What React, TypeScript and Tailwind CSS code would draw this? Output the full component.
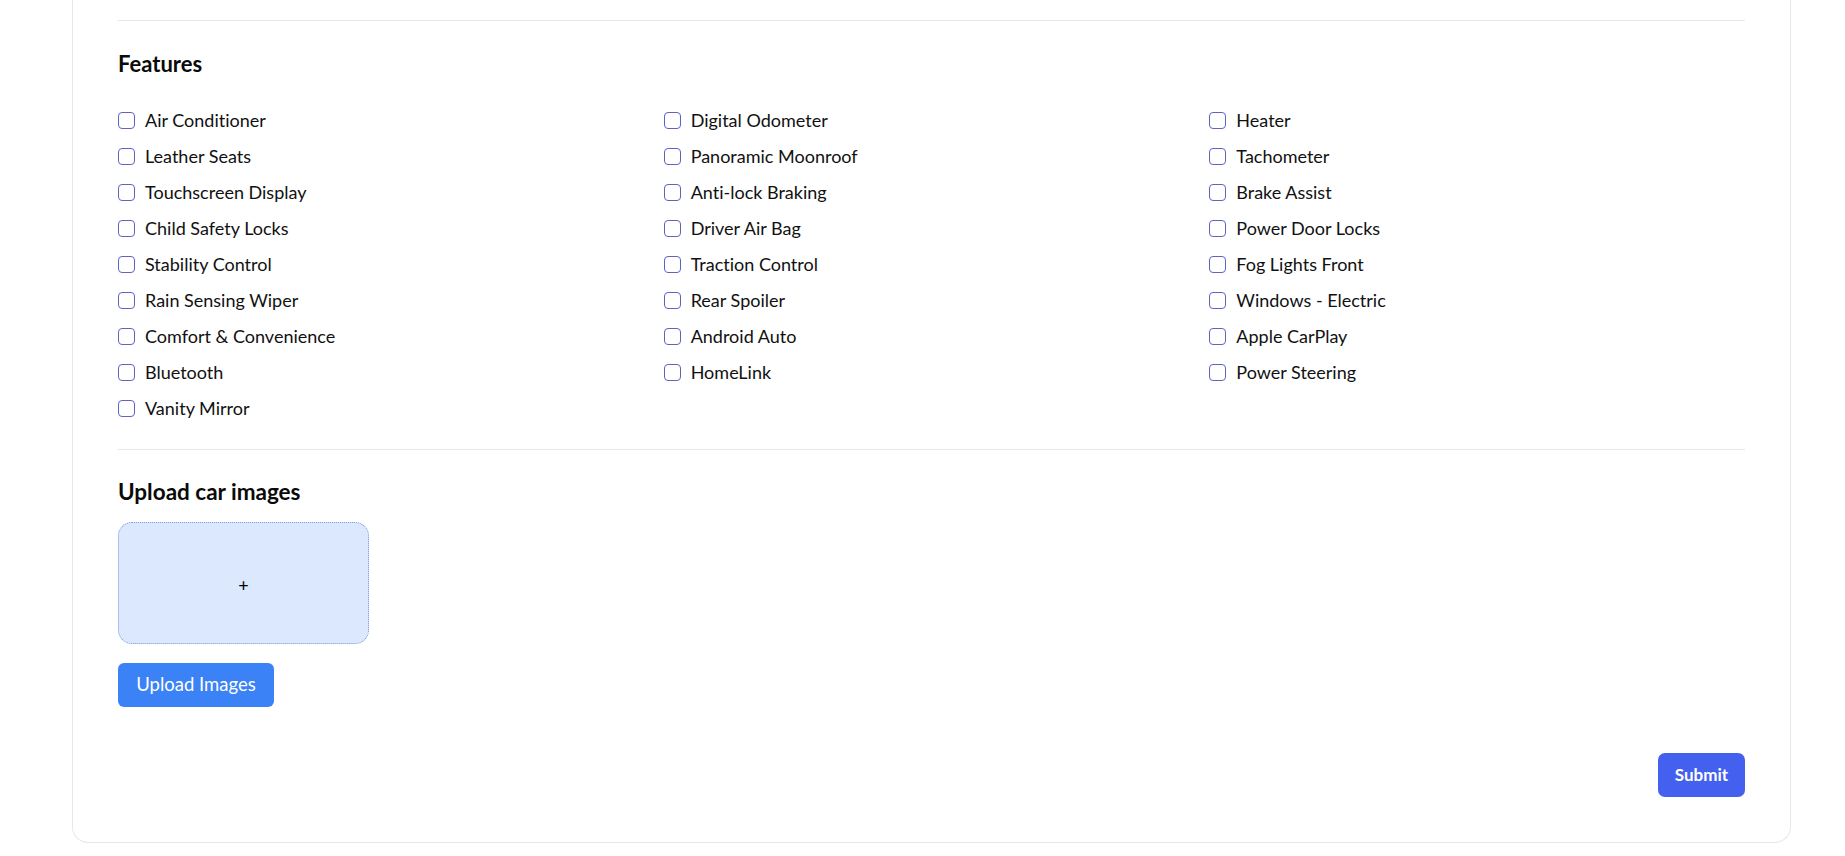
import React from "react";

const col1 = [
  "Air Conditioner",
  "Leather Seats",
  "Touchscreen Display",
  "Child Safety Locks",
  "Stability Control",
  "Rain Sensing Wiper",
  "Comfort & Convenience",
  "Bluetooth",
  "Vanity Mirror",
];
const col2 = [
  "Digital Odometer",
  "Panoramic Moonroof",
  "Anti-lock Braking",
  "Driver Air Bag",
  "Traction Control",
  "Rear Spoiler",
  "Android Auto",
  "HomeLink",
];
const col3 = [
  "Heater",
  "Tachometer",
  "Brake Assist",
  "Power Door Locks",
  "Fog Lights Front",
  "Windows - Electric",
  "Apple CarPlay",
  "Power Steering",
];

function Item({ label }: { label: string }) {
  return (
    <label className="flex h-[36px] items-center gap-[10px]">
      <input
        type="checkbox"
        className="m-0 h-[17px] w-[17px] shrink-0 appearance-none rounded-[4px] border-[1.5px] border-[#5f63c4] bg-white"
      />
      <span className="text-[18px] leading-[30px] text-[#111111]">{label}</span>
    </label>
  );
}

function Column({ items }: { items: string[] }) {
  return (
    <div className="flex flex-col">
      {items.map((l) => (
        <Item key={l} label={l} />
      ))}
    </div>
  );
}

export default function App() {
  return (
    <div
      className="min-h-screen bg-white [font-variant-ligatures:none]"
      style={{ fontFamily: 'Lato, "Noto Sans", sans-serif' }}
    >
      <div className="ml-[72px] w-[1719px] rounded-b-[16px] border-x border-b border-[#e5e7eb] px-[45px] pb-[45px] pt-[20px]">
        <div className="h-px bg-[#e5e7eb]" />
        <h2 className="mt-[28px] text-[22px] font-bold leading-[30px] text-[#0a0a0a]">
          Features
        </h2>
        <div className="mt-[23px] grid grid-cols-3 gap-x-[10px]">
          <Column items={col1} />
          <Column items={col2} />
          <Column items={col3} />
        </div>
        <div className="mt-[23px] h-px bg-[#e5e7eb]" />
        <h2 className="mt-[27px] text-[22.5px] font-bold leading-[30px] text-[#0a0a0a]">
          Upload car images
        </h2>
        <div className="mt-[15px] flex h-[122px] w-[251px] items-center justify-center rounded-[14px] border border-dotted border-[#7f93e0] bg-[#dbe8fd] pt-[4px] text-[18px] text-black">
          +
        </div>
        <button className="mt-[19px] flex h-[44px] w-[156px] items-center justify-center rounded-[6px] bg-[#3b82f6] text-[18.5px] text-white">
          Upload Images
        </button>
        <div className="mt-[46px] flex justify-end">
          <button className="flex h-[44px] w-[87px] items-center justify-center rounded-[7px] bg-[#4361ee] text-[17px] font-bold text-white">
            Submit
          </button>
        </div>
      </div>
    </div>
  );
}
